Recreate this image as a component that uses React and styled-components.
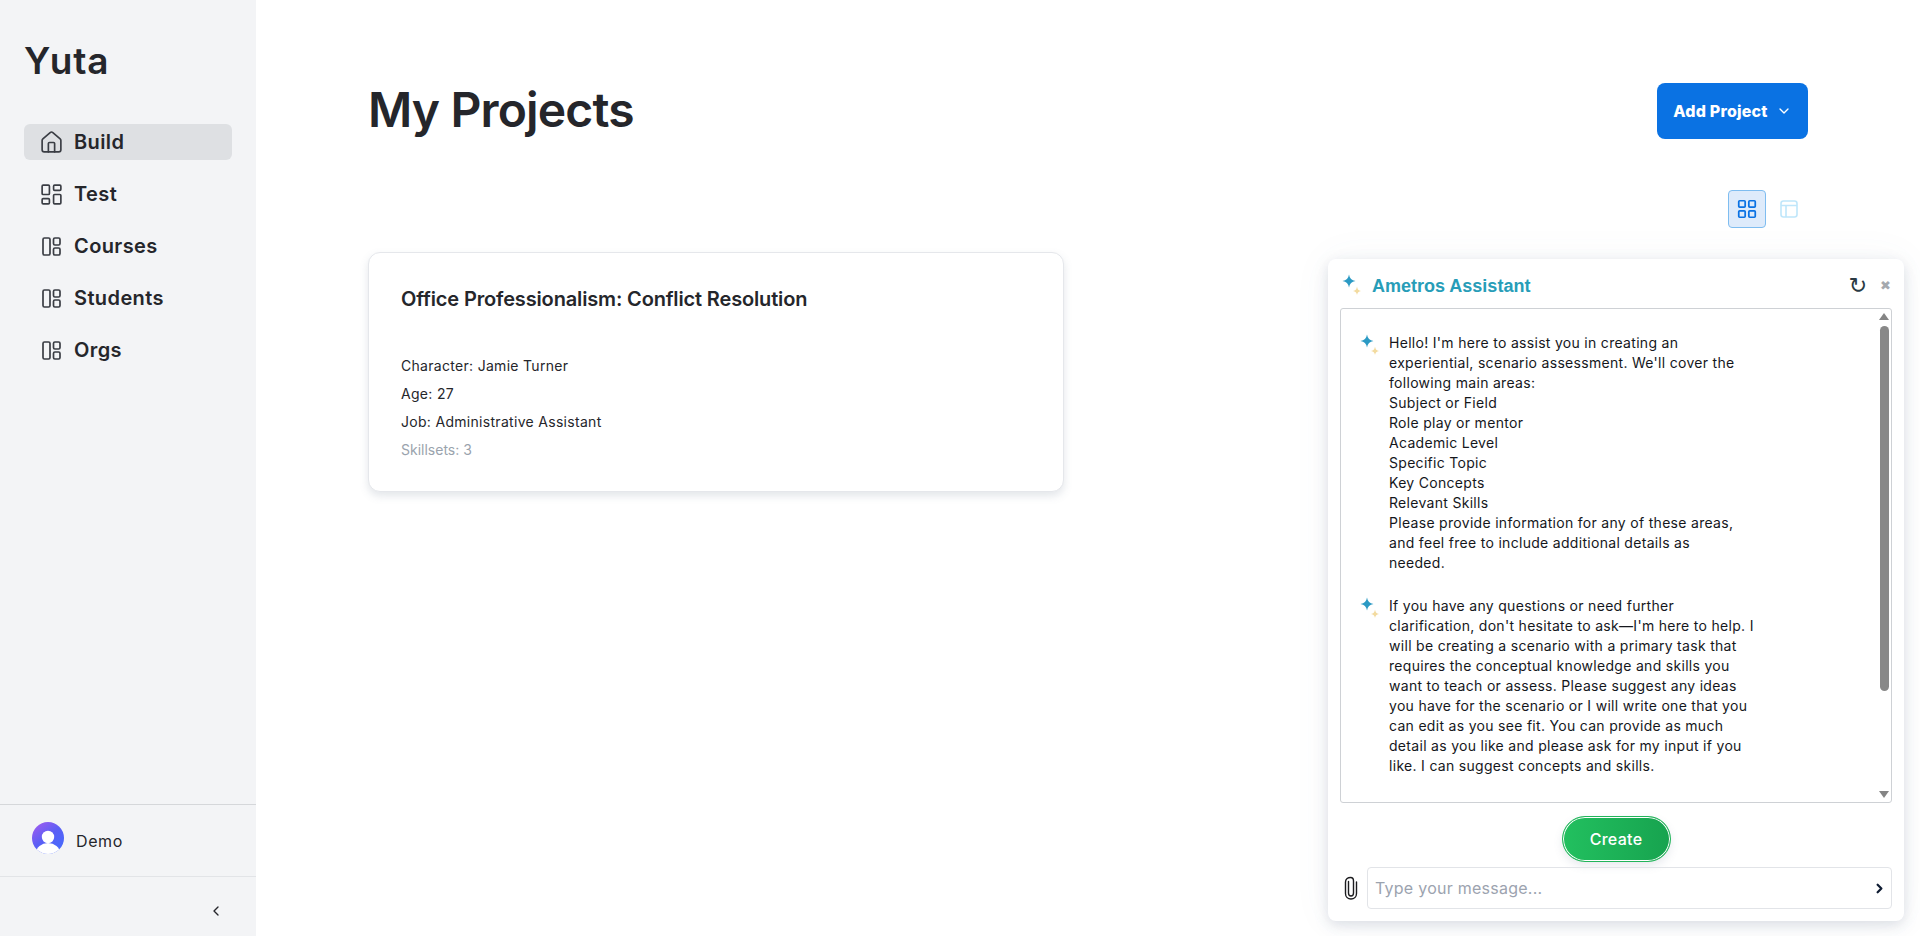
import styled, { createGlobalStyle } from 'styled-components';
import { ChevronDown, ChevronLeft, ChevronRight, LayoutDashboard, LayoutGrid, House } from 'lucide-react';

const GlobalStyle = createGlobalStyle`
  html, body {
    margin: 0;
    height: 100%;
    background: #fff;
  }
  body {
    font-family: Inter, "Open Sans", sans-serif;
    color: #25262b;
    overflow: hidden;
  }
  * { box-sizing: border-box; }
`;

function SplitIcon() {
  return (
    <svg width="25" height="25" viewBox="-2.5 -2.5 25 25" fill="none" stroke="#3a3d44" strokeWidth="1.7">
      <rect x="1.5" y="1.5" width="7" height="17" rx="1.4" />
      <rect x="12" y="1.5" width="6.5" height="7" rx="1.4" />
      <rect x="12" y="11.5" width="6.5" height="7" rx="1.4" />
    </svg>
  );
}

function TableIcon() {
  return (
    <svg width="18" height="18" viewBox="0 0 18 18" fill="none" stroke="#bfe6fa" strokeWidth="1.6">
      <rect x="1" y="1" width="16" height="16" rx="2.5" />
      <path d="M1 5.5h16M6 5.5V17" />
    </svg>
  );
}

function Sparkle() {
  return (
    <svg width="24" height="24" viewBox="0 0 24 24">
      <path d="M11 3.5 Q11.8 9.2 17.5 10 Q11.8 10.8 11 16.5 Q10.2 10.8 4.5 10 Q10.2 9.2 11 3.5Z" fill="#2b9ac4" />
      <path d="M19 15.5 Q19.5 19.5 23 20 Q19.5 20.5 19 24 Q18.5 20.5 15 20 Q18.5 19.5 19 15.5Z" fill="#f3dba0" />
    </svg>
  );
}

function Avatar() {
  return (
    <svg width="32" height="32" viewBox="0 0 32 32">
      <defs>
        <linearGradient id="avatarFill" x1="0.2" y1="0" x2="0.8" y2="0.8">
          <stop offset="0" stopColor="#9b5cf0" />
          <stop offset="0.55" stopColor="#5a5ff5" />
          <stop offset="1" stopColor="#4a68fb" />
        </linearGradient>
        <clipPath id="avatarClip"><circle cx="16" cy="16" r="16" /></clipPath>
      </defs>
      <g clipPath="url(#avatarClip)">
        <rect width="32" height="32" fill="url(#avatarFill)" />
        <circle cx="16" cy="15" r="6.2" fill="#fff" />
        <ellipse cx="16" cy="31" rx="12" ry="10" fill="#fff" />
      </g>
    </svg>
  );
}

function ClipIcon() {
  return (
    <svg width="16" height="24" viewBox="0 0 16 24" fill="none" stroke="#1c1c1f" strokeWidth="1.4" strokeLinecap="round">
      <path d="M5.5 5.5 V17 C5.5 19 6.6 20 8 20 C9.4 20 10.5 19 10.5 17 V5 C10.5 2.8 9.4 1.5 7.6 1.5 C5 1.5 2.5 3 2.5 6 V17.5 C2.5 21 5 23 8 23 C11 23 13.5 21 13.5 17.5 V6" />
    </svg>
  );
}

const navItems = [
  { label: 'Build', icon: <House size={25} strokeWidth={1.6} />, active: true },
  { label: 'Test', icon: <LayoutDashboard size={25} strokeWidth={1.6} /> },
  { label: 'Courses', icon: <SplitIcon /> },
  { label: 'Students', icon: <SplitIcon /> },
  { label: 'Orgs', icon: <SplitIcon /> },
];

const firstMessage = [
  "Hello! I'm here to assist you in creating an",
  "experiential, scenario assessment. We'll cover the",
  'following main areas:',
  'Subject or Field',
  'Role play or mentor',
  'Academic Level',
  'Specific Topic',
  'Key Concepts',
  'Relevant Skills',
  'Please provide information for any of these areas,',
  'and feel free to include additional details as',
  'needed.',
];

const secondMessage = [
  'If you have any questions or need further',
  "clarification, don't hesitate to ask—I'm here to help. I",
  'will be creating a scenario with a primary task that',
  'requires the conceptual knowledge and skills you',
  'want to teach or assess. Please suggest any ideas',
  'you have for the scenario or I will write one that you',
  'can edit as you see fit. You can provide as much',
  'detail as you like and please ask for my input if you',
  'like. I can suggest concepts and skills.',
];

export default function App() {
  return (
    <>
      <GlobalStyle />
      <Page>
        <Sidebar>
          <Logo>Yuta</Logo>
          <Nav>
            {navItems.map((item) => (
              <NavItem key={item.label} $active={item.active}>
                {item.icon}
                <span>{item.label}</span>
              </NavItem>
            ))}
          </Nav>
          <UserRow>
            <AvatarWrap>
              <Avatar />
            </AvatarWrap>
            <UserName>Demo</UserName>
          </UserRow>
          <CollapseRow>
            <ChevronLeft size={16} strokeWidth={2} />
          </CollapseRow>
        </Sidebar>
        <Main>
          <Header>
            <Title>My Projects</Title>
            <AddButton>
              Add Project
              <ChevronDown size={16} strokeWidth={2} />
            </AddButton>
          </Header>
          <ViewToggle>
            <ToggleButton $active>
              <LayoutGrid size={22} strokeWidth={1.9} />
            </ToggleButton>
            <ToggleButton>
              <TableIcon />
            </ToggleButton>
          </ViewToggle>
          <Card>
            <CardTitle>Office Professionalism: Conflict Resolution</CardTitle>
            <CardLines>
              <CardLine>Character: Jamie Turner</CardLine>
              <CardLine>Age: 27</CardLine>
              <CardLine>Job: Administrative Assistant</CardLine>
              <CardLine $muted>Skillsets: 3</CardLine>
            </CardLines>
          </Card>
        </Main>
        <Chat>
          <ChatHeader>
            <HeaderSparkle>
              <Sparkle />
            </HeaderSparkle>
            <ChatTitle>Ametros Assistant</ChatTitle>
            <RefreshGlyph>↻</RefreshGlyph>
            <CloseGlyph>✖</CloseGlyph>
          </ChatHeader>
          <Messages>
            <Message>
              <Sparkle />
              <MessageText>
                {firstMessage.map((line) => <div key={line}>{line}</div>)}
              </MessageText>
            </Message>
            <Message>
              <Sparkle />
              <MessageText>
                {secondMessage.map((line) => <div key={line}>{line}</div>)}
              </MessageText>
            </Message>
            <Scrollbar>
              <ArrowUp />
              <Thumb />
              <ArrowDown />
            </Scrollbar>
          </Messages>
          <CreateRow>
            <CreateButton>Create</CreateButton>
          </CreateRow>
          <InputRow>
            <ClipIcon />
            <InputBox>
              <Placeholder>Type your message...</Placeholder>
              <ChevronRight size={15} strokeWidth={3.6} color="#0f1c33" />
            </InputBox>
          </InputRow>
        </Chat>
      </Page>
    </>
  );
}

const Page = styled.div`
  position: relative;
  display: flex;
  width: 1920px;
  height: 936px;
  overflow: hidden;
`;

const Sidebar = styled.aside`
  display: flex;
  flex-direction: column;
  flex: 0 0 256px;
  background: #f3f4f6;
`;

const Logo = styled.div`
  padding: 37px 24px 0;
  font-size: 37px;
  line-height: 48px;
  font-weight: 600;
  letter-spacing: 0.8px;
  color: #25262b;
`;

const Nav = styled.nav`
  display: flex;
  flex-direction: column;
  gap: 16px;
  margin-top: 39px;
  padding: 0 24px;
  flex: 1;
`;

const NavItem = styled.div`
  display: flex;
  align-items: center;
  gap: 10px;
  height: 36px;
  padding-left: 15px;
  border-radius: 6px;
  background: ${(p) => (p.$active ? '#dee0e3' : 'transparent')};
  color: #25262b;
  font-size: 20px;
  font-weight: 600;
  letter-spacing: 0.4px;
  svg { flex: none; color: #3a3d44; }
`;

const UserRow = styled.div`
  display: flex;
  align-items: center;
  gap: 12px;
  height: 73px;
  padding-left: 32px;
  border-top: 1px solid #d5d7da;
  border-bottom: 1px solid #e2e4e7;
`;

const AvatarWrap = styled.div`
  display: flex;
  margin-bottom: 6px;
`;

const UserName = styled.span`
  font-size: 16px;
  letter-spacing: 0.6px;
  color: #25262b;
`;

const CollapseRow = styled.div`
  display: flex;
  align-items: center;
  justify-content: flex-end;
  height: 59px;
  padding: 9px 32px 0 0;
  color: #25262b;
`;

const Main = styled.main`
  flex: 1;
  padding: 83px 112px 0;
  background: #fff;
`;

const Header = styled.div`
  display: flex;
  align-items: flex-start;
  justify-content: space-between;
`;

const Title = styled.h1`
  margin: 0;
  font-size: 48px;
  line-height: 54px;
  font-weight: 600;
  color: #25262b;
  letter-spacing: -0.85px;
`;

const AddButton = styled.button`
  display: flex;
  align-items: center;
  justify-content: center;
  gap: 8px;
  width: 151px;
  height: 56px;
  padding-bottom: 2px;
  border: 0;
  border-radius: 8px;
  background: #0a72e3;
  color: #fff;
  font-family: inherit;
  font-size: 16px;
  font-weight: 800;
  letter-spacing: 0.2px;
`;

const ViewToggle = styled.div`
  display: flex;
  justify-content: flex-end;
  gap: 4px;
  margin-top: 51px;
`;

const ToggleButton = styled.div`
  display: flex;
  align-items: center;
  justify-content: center;
  width: 38px;
  height: 38px;
  border-radius: 4px;
  border: 1px solid ${(p) => (p.$active ? '#7fbdf0' : 'transparent')};
  background: ${(p) => (p.$active ? '#deebfb' : 'transparent')};
  color: #0a72e3;
`;

const Card = styled.section`
  width: 696px;
  height: 240px;
  margin-top: 24px;
  padding: 32px 32px 0;
  border: 1px solid #e5e7eb;
  border-radius: 12px;
  background: #fff;
  box-shadow: 0 4px 8px rgba(100, 116, 139, 0.18);
`;

const CardTitle = styled.h2`
  margin: 0;
  font-size: 20px;
  line-height: 28px;
  font-weight: 600;
  letter-spacing: -0.15px;
  color: #25262b;
`;

const CardLines = styled.div`
  display: flex;
  flex-direction: column;
  gap: 8px;
  margin-top: 43px;
`;

const CardLine = styled.div`
  font-size: 14px;
  line-height: 20px;
  letter-spacing: ${(p) => (p.$muted ? '0' : '0.3px')};
  color: ${(p) => (p.$muted ? '#9aa3ad' : '#25262b')};
`;

const Chat = styled.div`
  position: absolute;
  left: 1328px;
  top: 259px;
  display: flex;
  flex-direction: column;
  width: 576px;
  height: 662px;
  padding: 0 12px;
  border-radius: 8px;
  background: #fff;
  box-shadow: 0 4px 14px rgba(100, 116, 139, 0.22), 0 0 40px rgba(100, 116, 139, 0.05);
`;

const ChatHeader = styled.div`
  display: flex;
  align-items: center;
  height: 49px;
  padding-top: 2px;
`;

const HeaderSparkle = styled.div`
  display: flex;
  margin: 0 0 4px -2px;
`;

const ChatTitle = styled.div`
  flex: 1;
  margin-left: 10px;
  padding-top: 4px;
  font-family: "Liberation Sans", Arial, sans-serif;
  font-size: 18px;
  font-weight: 700;
  color: #279db8;
`;

const RefreshGlyph = styled.span`
  margin-right: 13px;
  padding-top: 2px;
  font-family: "DejaVu Sans", sans-serif;
  font-size: 22px;
  line-height: 24px;
  color: #2a3a44;
`;

const CloseGlyph = styled.span`
  margin-right: 1px;
  padding-top: 2px;
  font-family: "DejaVu Sans", sans-serif;
  font-size: 13px;
  color: #a5a9ae;
`;

const Messages = styled.div`
  position: relative;
  height: 495px;
  padding: 22px 16px 0 15px;
  border: 1px solid #ced1d5;
  border-radius: 3px;
  overflow: hidden;
`;

const Message = styled.div`
  display: flex;
  gap: 9px;
  margin-bottom: 21px;
`;

const MessageText = styled.div`
  padding-top: 2px;
  font-size: 14px;
  line-height: 20px;
  letter-spacing: 0.3px;
  color: #15171c;
  white-space: nowrap;
`;

const Scrollbar = styled.div`
  position: absolute;
  top: 0;
  right: 0;
  bottom: 0;
  display: flex;
  flex-direction: column;
  align-items: center;
  width: 14px;
  padding: 4px 0;
`;

const ArrowUp = styled.div`
  width: 0;
  height: 0;
  border-left: 5px solid transparent;
  border-right: 5px solid transparent;
  border-bottom: 7px solid #858585;
`;

const ArrowDown = styled.div`
  width: 0;
  height: 0;
  margin-top: auto;
  border-left: 5px solid transparent;
  border-right: 5px solid transparent;
  border-top: 7px solid #858585;
`;

const Thumb = styled.div`
  width: 9px;
  height: 365px;
  margin-top: 6px;
  border-radius: 5px;
  background: #888;
`;

const CreateRow = styled.div`
  display: flex;
  justify-content: center;
  margin-top: 13px;
`;

const CreateButton = styled.button`
  width: 109px;
  height: 46px;
  border: 1px solid #22b45a;
  border-radius: 24px;
  background: linear-gradient(90deg, #22c05f, #17a34f);
  box-shadow: inset 0 0 0 1px #fff, 0 4px 8px rgba(100, 116, 139, 0.15);
  color: #fff;
  font-family: inherit;
  font-size: 16px;
  font-weight: 500;
  letter-spacing: 0.3px;
`;

const InputRow = styled.div`
  display: flex;
  align-items: center;
  gap: 8px;
  margin-top: 5px;
  padding-left: 3px;
`;

const InputBox = styled.div`
  display: flex;
  align-items: center;
  justify-content: space-between;
  flex: 1;
  height: 42px;
  padding: 0 4px 0 7px;
  border: 1px solid #e2e4e8;
  border-radius: 4px;
`;

const Placeholder = styled.span`
  font-size: 16px;
  letter-spacing: 0.25px;
  color: #9ca3af;
`;
